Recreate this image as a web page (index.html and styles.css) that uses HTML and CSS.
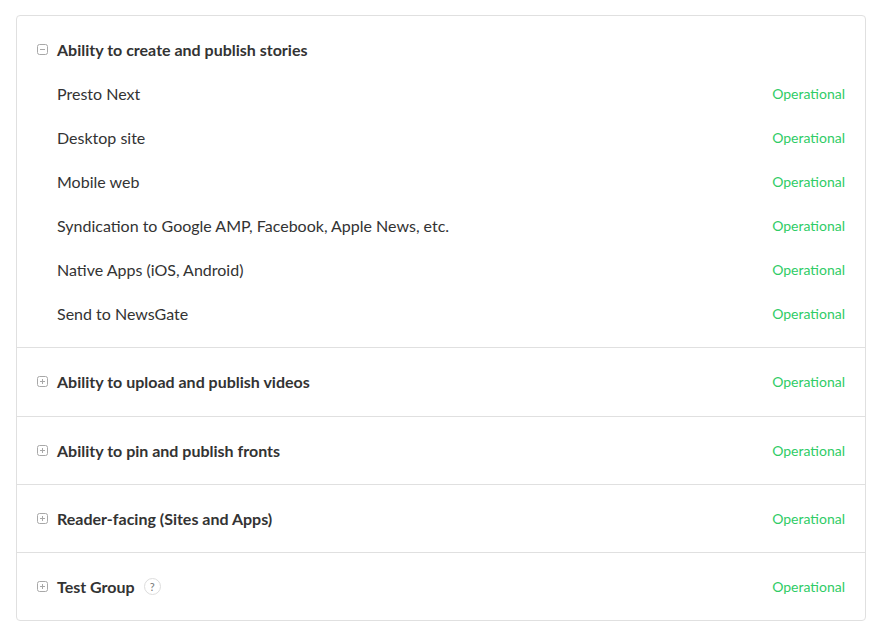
FILE: index.html
```html
<!DOCTYPE html>
<html>
<head>
<meta charset="utf-8">
<link rel="stylesheet" href="styles.css">
</head>
<body>
<div class="components">
  <div class="group open">
    <div class="row head">
      <span class="toggle"><svg width="11" height="11" viewBox="0 0 11 11"><rect x="0.5" y="0.5" width="10" height="10" rx="2" fill="none" stroke="#a8a8a8"/><line x1="3" y1="5.5" x2="8" y2="5.5" stroke="#a8a8a8"/></svg></span>
      <span class="name">Ability to create and publish stories</span>
    </div>
    <div class="row child"><span class="name">Presto Next</span><span class="status">Operational</span></div>
    <div class="row child"><span class="name">Desktop site</span><span class="status">Operational</span></div>
    <div class="row child"><span class="name">Mobile web</span><span class="status">Operational</span></div>
    <div class="row child"><span class="name">Syndication to Google AMP, Facebook, Apple News, etc.</span><span class="status">Operational</span></div>
    <div class="row child"><span class="name">Native Apps (iOS, Android)</span><span class="status">Operational</span></div>
    <div class="row child"><span class="name">Send to NewsGate</span><span class="status">Operational</span></div>
  </div>
  <div class="group">
    <div class="row head">
      <span class="toggle"><svg width="11" height="11" viewBox="0 0 11 11"><rect x="0.5" y="0.5" width="10" height="10" rx="2" fill="none" stroke="#a8a8a8"/><line x1="3" y1="5.5" x2="8" y2="5.5" stroke="#a8a8a8"/><line x1="5.5" y1="3" x2="5.5" y2="8" stroke="#a8a8a8"/></svg></span>
      <span class="name">Ability to upload and publish videos</span>
      <span class="status">Operational</span>
    </div>
  </div>
  <div class="group">
    <div class="row head">
      <span class="toggle"><svg width="11" height="11" viewBox="0 0 11 11"><rect x="0.5" y="0.5" width="10" height="10" rx="2" fill="none" stroke="#a8a8a8"/><line x1="3" y1="5.5" x2="8" y2="5.5" stroke="#a8a8a8"/><line x1="5.5" y1="3" x2="5.5" y2="8" stroke="#a8a8a8"/></svg></span>
      <span class="name">Ability to pin and publish fronts</span>
      <span class="status">Operational</span>
    </div>
  </div>
  <div class="group">
    <div class="row head">
      <span class="toggle"><svg width="11" height="11" viewBox="0 0 11 11"><rect x="0.5" y="0.5" width="10" height="10" rx="2" fill="none" stroke="#a8a8a8"/><line x1="3" y1="5.5" x2="8" y2="5.5" stroke="#a8a8a8"/><line x1="5.5" y1="3" x2="5.5" y2="8" stroke="#a8a8a8"/></svg></span>
      <span class="name">Reader-facing (Sites and Apps)</span>
      <span class="status">Operational</span>
    </div>
  </div>
  <div class="group">
    <div class="row head">
      <span class="toggle"><svg width="11" height="11" viewBox="0 0 11 11"><rect x="0.5" y="0.5" width="10" height="10" rx="2" fill="none" stroke="#a8a8a8"/><line x1="3" y1="5.5" x2="8" y2="5.5" stroke="#a8a8a8"/><line x1="5.5" y1="3" x2="5.5" y2="8" stroke="#a8a8a8"/></svg></span>
      <span class="name">Test Group</span>
      <span class="help">?</span>
      <span class="status">Operational</span>
    </div>
  </div>
</div>
</body>
</html>
```
FILE: styles.css
```css
html, body {
  margin: 0;
  padding: 0;
  background: #ffffff;
}
body {
  padding: 15px 21px 0 16px;
  font-family: "Lato", "Liberation Sans", sans-serif;
  color: #333333;
}
.components {
  border: 1px solid #e0e0e0;
  border-radius: 4px;
}
.group {
  padding: 12px 20px 11px 20px;
  border-top: 1px solid #e0e0e0;
}
.group:first-child {
  border-top: none;
}
.group:nth-child(2) {
  padding-bottom: 12px;
}
.row {
  display: flex;
  align-items: center;
  height: 44px;
  box-sizing: border-box;
  padding-bottom: 2px;
}
.toggle {
  width: 11px;
  height: 11px;
  margin-right: 9px;
  display: flex;
}
.toggle svg {
  display: block;
}
.head .name {
  font-weight: 700;
  font-size: 16px;
  color: #333333;
}
.child {
  padding-left: 20px;
}
.child .name {
  font-size: 16px;
  color: #333333;
}
.status {
  margin-left: auto;
  font-size: 14px;
  color: #2fcc66;
}
.help {
  width: 17px;
  height: 17px;
  box-sizing: border-box;
  border: 1px solid #dddddd;
  border-radius: 50%;
  font-size: 11px;
  color: #777777;
  display: flex;
  align-items: center;
  justify-content: center;
  margin-left: 9px;
}
```
